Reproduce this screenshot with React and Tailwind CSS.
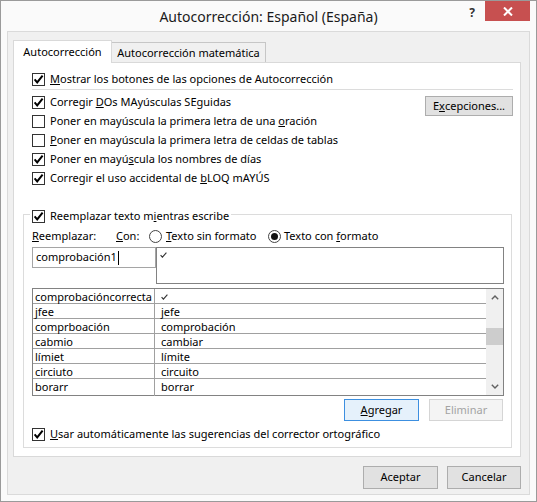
import React from 'react'

const entries = [
  { from: 'comprobacióncorrecta', to: null },
  { from: 'jfee', to: 'jefe' },
  { from: 'comprboación', to: 'comprobación' },
  { from: 'cabmio', to: 'cambiar' },
  { from: 'límiet', to: 'límite' },
  { from: 'circiuto', to: 'circuito' },
  { from: 'borarr', to: 'borrar' },
]

function Chk({ on }) {
  return (
    <span className="flex h-[13px] w-[13px] shrink-0 items-center justify-center border border-[#333] bg-white">
      {on && (
        <svg width="11" height="11" viewBox="0 0 11 11">
          <path d="M1.6 5.4 L4.2 8.4 L9.6 1.6" fill="none" stroke="#000" strokeWidth="2" />
        </svg>
      )}
    </span>
  )
}

function Radio({ on }) {
  return (
    <span className="flex h-[13px] w-[13px] shrink-0 items-center justify-center rounded-full border border-[#444] bg-white">
      {on && <span className="h-[7px] w-[7px] rounded-full bg-[#111]" />}
    </span>
  )
}

function CheckRow({ on, children }) {
  return (
    <div className="flex h-[19px] items-center">
      <Chk on={on} />
      <span className="ml-[5px]">{children}</span>
    </div>
  )
}

function Btn({ children, className = '', def, disabled }) {
  const look = disabled
    ? 'border-[#d5d5d5] bg-[#f4f4f4] text-[#a3a3a3]'
    : def
      ? 'border-[#3c8fe0] bg-[#e5f1fb]'
      : 'border-[#adadad] bg-[#e1e1e1]'
  return (
    <div className={`flex shrink-0 items-center justify-center border ${look} ${className}`}>{children}</div>
  )
}

function TinyCheck() {
  return (
    <svg width="7" height="6" viewBox="0 0 7 6">
      <path d="M0.6 3.2 L2.4 5.2 L6.4 0.6" fill="none" stroke="#333" strokeWidth="1.1" />
    </svg>
  )
}

function Chevron({ up }) {
  return (
    <svg width="8" height="5" viewBox="0 0 8 5">
      <path d={up ? 'M0.8 4.2 L4 1 L7.2 4.2' : 'M0.8 0.8 L4 4 L7.2 0.8'} fill="none" stroke="#606060" strokeWidth="1.4" />
    </svg>
  )
}

export default function App() {
  return (
    <div className="flex h-[502px] w-[537px] flex-col border border-[#9a9a9a] bg-[#fafafa] font-['Noto_Sans',sans-serif] text-[11px] text-black">
      {/* Title bar */}
      <div className="grid h-[30px] grid-cols-[1fr_auto_1fr]">
        <div />
        <div className="flex items-center pt-[1px] text-[14px] text-[#1a1a1a]">Autocorrección: Español (España)</div>
        <div className="flex items-start justify-end">
          <span className="mr-[10px] mt-[5px] text-[12px] font-bold leading-[14px] text-[#333]">?</span>
          <div className="mr-[6px] flex h-[20px] w-[45px] items-center justify-center bg-[#c75050]">
            <svg width="10" height="9" viewBox="0 0 10 9">
              <path d="M1 0.5 L9 8.5 M9 0.5 L1 8.5" stroke="#fff" strokeWidth="2" />
            </svg>
          </div>
        </div>
      </div>

      {/* Client area */}
      <div className="mx-[6px] flex-1 border border-[#dadada] bg-[#f0f0f0] pl-[5px] pr-[8px] pt-[8px]">
        {/* Tabs */}
        <div className="flex h-[22px] items-end">
          <div className="relative z-10 -mb-px flex h-[23px] w-[99px] items-center justify-center border border-b-0 border-[#d9d9d9] bg-white">
            Autocorrección
          </div>
          <div className="flex h-[20px] w-[154px] items-center justify-center border border-b-0 border-l-0 border-[#c6c6c6] bg-[#f0f0f0] pt-[2px]">
            Autocorrección matemática
          </div>
        </div>

        {/* Tab panel */}
        <div className="h-[395px] border border-[#d9d9d9] bg-white">
          <div className="ml-[18px] mr-[7px] pt-[7px]">
            <CheckRow on>
              <u>M</u>ostrar los botones de las opciones de Autocorrección
            </CheckRow>
            <div className="h-px bg-[#dcdcdc]" />
            <div className="mt-[3px] flex justify-between">
              <div>
                <CheckRow on>
                  Corregir <u>D</u>Os MAyúsculas SEguidas
                </CheckRow>
                <CheckRow>
                  Poner en mayúscula la primera letra de una <u>o</u>ración
                </CheckRow>
                <CheckRow>
                  <u>P</u>oner en mayúscula la primera letra de celdas de tablas
                </CheckRow>
                <CheckRow on>
                  Poner en mayú<u>s</u>cula los nombres de días
                </CheckRow>
                <CheckRow on>
                  Corregir el uso accidental de <u>b</u>LOQ mAYÚS
                </CheckRow>
              </div>
              <Btn className="mt-[3px] h-[20px] w-[88px]">
                E<u>x</u>cepciones...
              </Btn>
            </div>
          </div>

          {/* Replace group */}
          <fieldset className="ml-[9px] mr-[8px] mt-[20px] border border-[#dcdcdc]">
            <legend className="ml-[6px] px-[2px]">
              <span className="relative top-[2px] flex h-[13px] items-center">
                <Chk on />
                <span className="ml-[5px]">
                  Reemplazar texto m<u>i</u>entras escribe
                </span>
              </span>
            </legend>
            <div className="pb-[3px] pl-[8px] pr-[7px]">
              <div className="mt-[8px] flex h-[15px] items-center">
                <span className="w-[84px]">
                  <u>R</u>eemplazar:
                </span>
                <span className="w-[33px]">
                  <u>C</u>on:
                </span>
                <span className="flex w-[119px] items-center">
                  <Radio />
                  <span className="ml-[4px]">
                    <u>T</u>exto sin formato
                  </span>
                </span>
                <span className="flex items-center">
                  <Radio on />
                  <span className="ml-[3px]">
                    Texto con <u>f</u>ormato
                  </span>
                </span>
              </div>

              <div className="mt-[3px] flex items-start">
                <div className="flex h-[21px] w-[124px] items-center border border-[#a5a5a5] bg-white pl-[3px]">
                  <span>comprobación1</span>
                  <span className="ml-px h-[14px] w-px bg-black" />
                </div>
                <div className="flex h-[37px] flex-1 items-start border border-[#828282] bg-white pl-[3px] pt-[4px]">
                  <TinyCheck />
                </div>
              </div>

              {/* Entries list */}
              <div className="mt-[4px] flex h-[108px] border border-[#828282] bg-white">
                <div className="flex-1">
                  {entries.map((e, i) => (
                    <div
                      key={e.from}
                      className={`grid grid-cols-[122px_1fr] ${i < entries.length - 1 ? 'h-[15px] border-b border-[#a0a0a0]' : 'h-[16px]'}`}
                    >
                      <div className="flex items-center border-r border-[#a0a0a0] pl-[2px]">{e.from}</div>
                      <div className="flex items-center pl-[6px]">{e.to ?? <TinyCheck />}</div>
                    </div>
                  ))}
                </div>
                <div className="flex w-[17px] flex-col bg-[#f0f0f0]">
                  <div className="flex h-[17px] items-center justify-center">
                    <Chevron up />
                  </div>
                  <div className="mt-[22px] h-[17px] bg-[#cdcdcd]" />
                  <div className="flex-1" />
                  <div className="flex h-[17px] items-center justify-center">
                    <Chevron />
                  </div>
                </div>
              </div>

              <div className="mr-px mt-[3px] flex justify-end gap-[10px]">
                <Btn def className="h-[22px] w-[75px]">
                  <u>A</u>gregar
                </Btn>
                <Btn disabled className="h-[22px] w-[74px]">
                  Eliminar
                </Btn>
              </div>

              <div className="mt-[4px]">
                <CheckRow on>
                  <u>U</u>sar automáticamente las sugerencias del corrector ortográfico
                </CheckRow>
              </div>
            </div>
          </fieldset>
        </div>

        {/* Dialog buttons */}
        <div className="mt-[9px] flex justify-end gap-[9px]">
          <Btn className="h-[23px] w-[75px]">Aceptar</Btn>
          <Btn className="h-[23px] w-[74px]">Cancelar</Btn>
        </div>
      </div>
      <div className="h-[6px]" />
    </div>
  )
}
